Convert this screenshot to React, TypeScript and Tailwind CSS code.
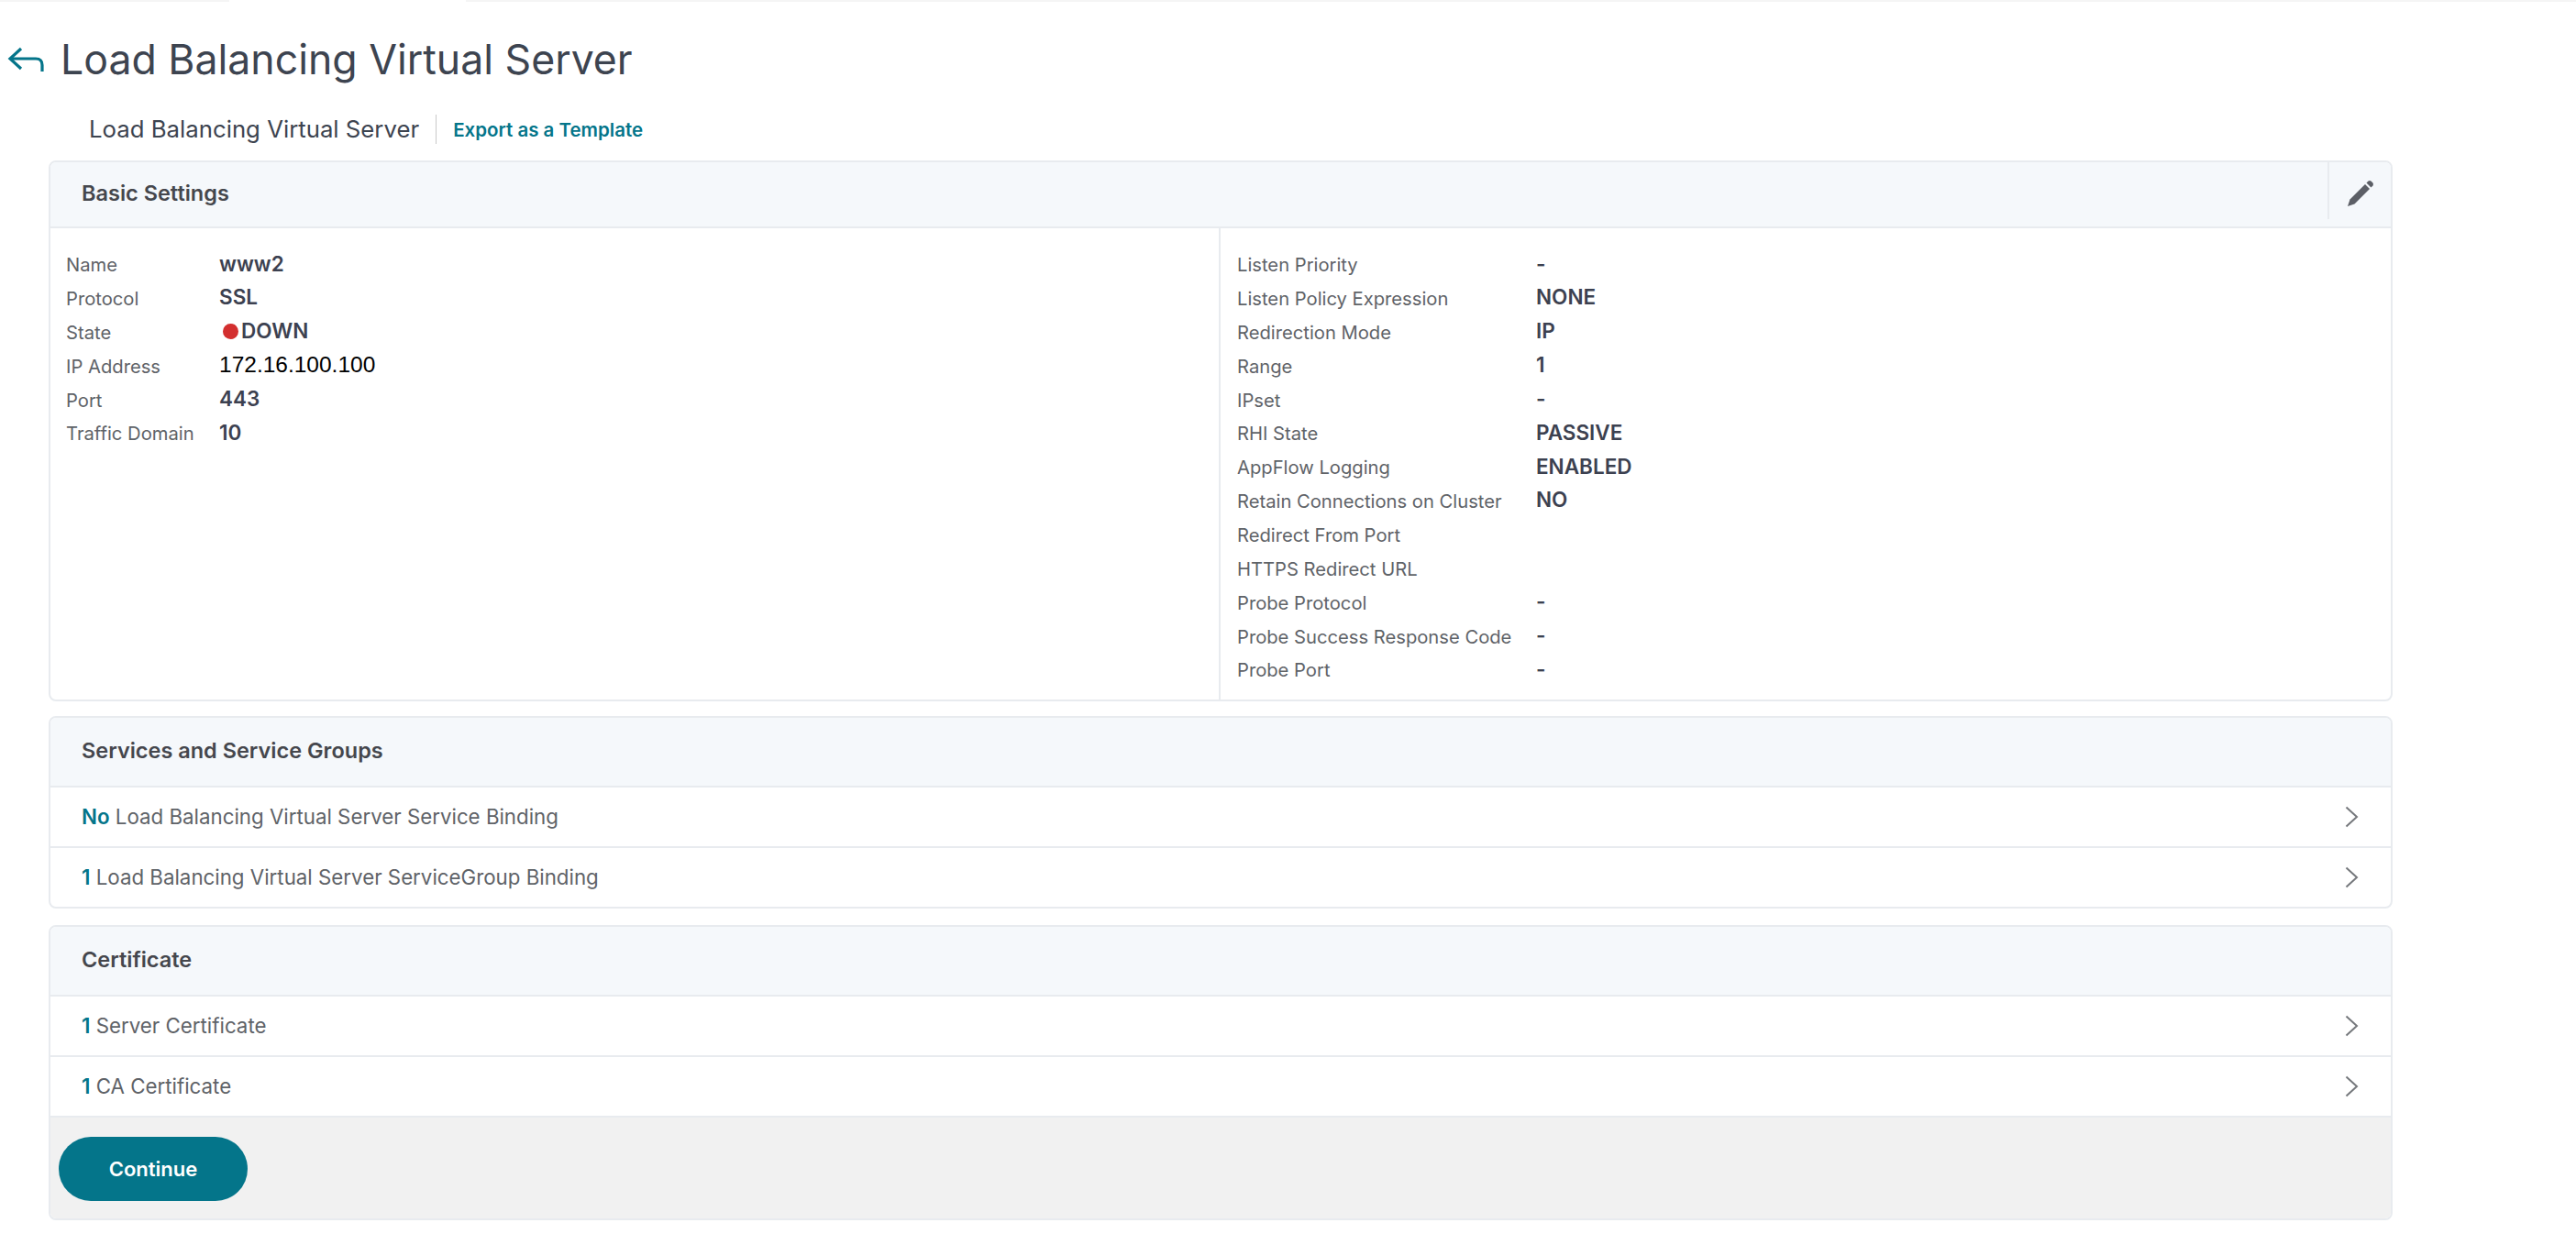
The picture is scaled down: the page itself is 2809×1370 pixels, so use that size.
import React from "react";

const left: [string, React.ReactNode][] = [
  ["Name", "www2"],
  ["Protocol", "SSL"],
  ["State", <span className="flex items-center gap-[3px]"><span className="ml-[4px] w-[17px] h-[17px] rounded-full bg-[#d32f2f]" />DOWN</span>],
  ["IP Address", <span className="font-normal text-black font-['Liberation_Sans',sans-serif] text-[24.5px]">172.16.100.100</span>],
  ["Port", "443"],
  ["Traffic Domain", "10"],
];
const right: [string, string][] = [
  ["Listen Priority", "-"],
  ["Listen Policy Expression", "NONE"],
  ["Redirection Mode", "IP"],
  ["Range", "1"],
  ["IPset", "-"],
  ["RHI State", "PASSIVE"],
  ["AppFlow Logging", "ENABLED"],
  ["Retain Connections on Cluster", "NO"],
  ["Redirect From Port", ""],
  ["HTTPS Redirect URL", ""],
  ["Probe Protocol", "-"],
  ["Probe Success Response Code", "-"],
  ["Probe Port", "-"],
];

function Rows({ rows, labelW }: { rows: [string, React.ReactNode][]; labelW: string }) {
  return (
    <div className="flex flex-col">
      {rows.map(([k, v]) => (
        <div key={k} className="flex h-[36.85px] items-center">
          <div className={`${labelW} text-[20.2px] text-[#5f6368] pt-[2px] whitespace-nowrap`}>{k}</div>
          <div className="text-[22.5px] font-semibold text-[#3c4150] pb-[2px]">{v}</div>
        </div>
      ))}
    </div>
  );
}

function Header({ title, h }: { title: string; h: string }) {
  return (
    <div className={`${h} flex items-center pl-[34px] pb-[2px] bg-[#f5f8fb] border-b-2 border-[#e8ebef] text-[23.5px] font-semibold text-[#45474d]`}>
      {title}
    </div>
  );
}

function Chevron() {
  return (
    <svg width="15" height="24" viewBox="0 0 15 24" fill="none" stroke="#75787c" strokeWidth="2">
      <path d="M1.5 1.5 L13 12 L1.5 22.5" />
    </svg>
  );
}

function BindRow({ n, text, last, h }: { n: string; text: string; last?: boolean; h: string }) {
  return (
    <div className={`${h} flex items-center justify-between pl-[34px] pr-[35px] text-[22.3px] text-[#5f6368] ${last ? "" : "border-b-2 border-[#e8ebef]"}`}>
      <span><span className="font-semibold text-[#04758a]">{n}</span> {text}</span>
      <Chevron />
    </div>
  );
}

export default function App() {
  return (
    <div className="w-[2809px] h-[1370px] bg-white overflow-hidden font-['Inter','Roboto',sans-serif]">
      <div className="flex h-[2px]">
        <div className="w-[250px] bg-[#f5f5f5]" />
        <div className="w-[258px]" />
        <div className="flex-1 bg-[#f5f5f5]" />
      </div>
      <div className="flex items-center h-[112px] pl-[8px] pt-[14px]">
        <svg width="40" height="28" viewBox="0 0 40 28" fill="none" stroke="#04758a" strokeWidth="3.2" className="mr-[18px]">
          <path d="M15 2 L3 13 L15 24" />
          <path d="M3 13 H31 Q38 13 38 20 V27" />
        </svg>
        <h1 className="text-[44.6px] font-normal text-[#3d4450]">Load Balancing Virtual Server</h1>
      </div>
      <div className="flex items-center h-[61px] pl-[97px] pb-[7px]">
        <span className="text-[25.75px] text-[#3d4450]">Load Balancing Virtual Server</span>
        <span className="w-px h-[32px] bg-[#c9c9c9] mx-[18px]" />
        <span className="text-[20.5px] font-semibold text-[#04758a] pt-[2px]">Export as a Template</span>
      </div>
      <div className="ml-[53px] w-[2556px] flex flex-col">
        <section className="border-2 border-[#e8ebef] rounded-[8px] h-[590px] flex flex-col overflow-hidden">
          <div className="relative">
            <Header title="Basic Settings" h="h-[72px]" />
            <div className="absolute right-0 top-0 h-[62px] w-[69px] border-l-2 border-[#e8ebef] flex items-center justify-center">
              <svg width="30" height="30" viewBox="0 0 30 30" fill="#5c5f66" className="mt-[6px]">
                <path d="M1 29 L3.5 21.5 L20 5 L25 10 L8.5 26.5 Z" />
                <path d="M21.5 3.5 L23.5 1.5 Q25 0.5 26.5 1.5 L28.5 3.5 Q29.5 5 28.5 6.5 L26.5 8.5 Z" />
              </svg>
            </div>
          </div>
          <div className="flex flex-1">
            <div className="w-[1276px] border-r-2 border-[#e8ebef] pl-[17px] pt-[21px]">
              <Rows rows={left} labelW="w-[167px]" />
            </div>
            <div className="flex-1 pl-[18px] pt-[21px]">
              <Rows rows={right} labelW="w-[326px]" />
            </div>
          </div>
        </section>
        <section className="mt-[16px] border-2 border-[#e8ebef] rounded-[8px] h-[210px] overflow-hidden">
          <Header title="Services and Service Groups" h="h-[76px]" />
          <BindRow h="h-[66px]" n="No" text="Load Balancing Virtual Server Service Binding" />
          <BindRow h="h-[64px]" n="1" text="Load Balancing Virtual Server ServiceGroup Binding" last />
        </section>
        <section className="mt-[18px] border-2 border-[#e8ebef] rounded-[8px] h-[322px] overflow-hidden flex flex-col">
          <Header title="Certificate" h="h-[76px]" />
          <BindRow h="h-[66px]" n="1" text="Server Certificate" />
          <BindRow h="h-[66px]" n="1" text="CA Certificate" />
          <div className="flex-1 bg-[#f1f1f1] pl-[9px] pt-[21px]">
            <button className="w-[206px] h-[70px] rounded-[35px] bg-[#04758a] text-white text-[22px] font-semibold">Continue</button>
          </div>
        </section>
      </div>
    </div>
  );
}
